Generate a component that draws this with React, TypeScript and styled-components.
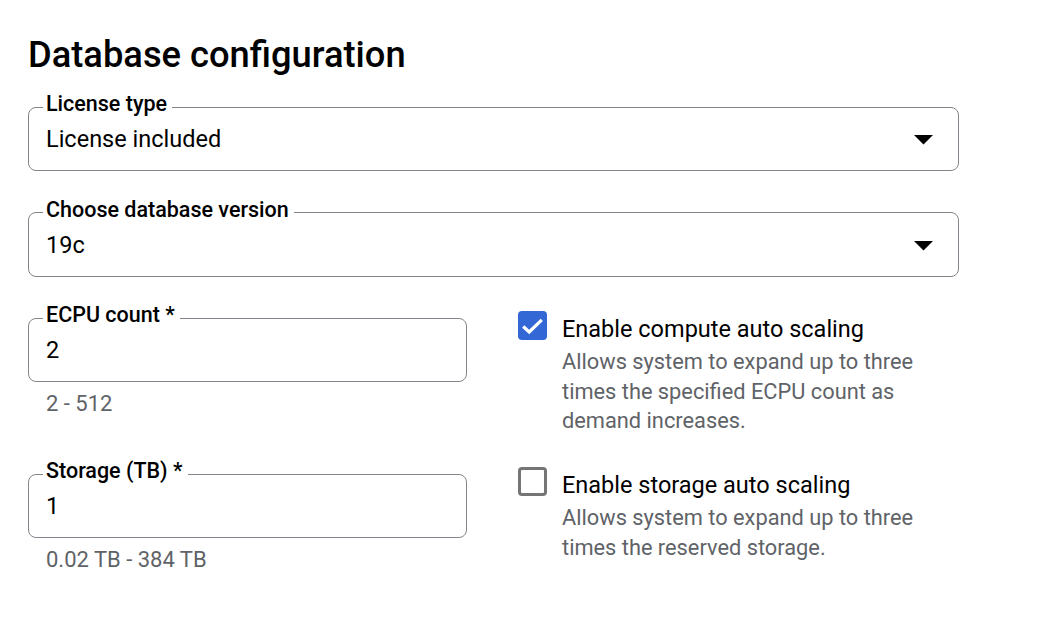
import styled, { createGlobalStyle } from "styled-components";

const GlobalStyle = createGlobalStyle`
	html, body {
		margin: 0;
		padding: 0;
		background: #ffffff;
		font-family: Roboto, "Noto Sans", Arial, sans-serif;
		color: #000000;
	}
	* {
		box-sizing: border-box;
	}
`;

const Page = styled.div`
	width: 1039px;
	height: 643px;
	padding: 33px 0 0 28px;
`;

const Title = styled.h1`
	margin: 0 0 14px 0;
	font-size: 36.3px;
	line-height: 44px;
	font-weight: 500;
	color: #000000;
`;

const Form = styled.div`
	display: flex;
	flex-direction: column;
	width: 931px;
`;

const Field = styled.fieldset`
	position: relative;
	margin: 0;
	width: 100%;
	padding: 1px 17px 16px 14px;
	border: 1px solid #80868b;
	border-radius: 8px;
	min-inline-size: 0;
`;

const Legend = styled.legend`
	padding: 0 5px 6px 3px;
	font-size: 21.5px;
	line-height: 26px;
	font-weight: 500;
	color: #000000;
	white-space: nowrap;
`;

const Value = styled.div`
	padding-left: 3px;
	font-size: 23.5px;
	line-height: 30px;
	color: #000000;
`;

const Caret = styled.svg`
	position: absolute;
	right: 25px;
	top: 12px;
	width: 19px;
	height: 10px;
`;

const SelectBlock = styled.div`
	margin-bottom: 25.5px;
`;

const Row = styled.div`
	display: flex;
	gap: 51px;
	align-items: flex-start;
`;

const RowSpacer = styled.div`
	height: 22.5px;
`;

const LeftCol = styled.div`
	width: 439px;
	flex-shrink: 0;
`;

const Helper = styled.div`
	margin-top: 8px;
	padding-left: 18px;
	font-size: 22px;
	line-height: 28px;
	color: #5f6368;
`;

const CheckRow = styled.label`
	display: flex;
	gap: 15px;
	padding-top: 9px;
	width: 420px;
`;

const Box = styled.span<{ $checked: boolean }>`
	flex-shrink: 0;
	width: 29px;
	height: 29px;
	border-radius: 4px;
	display: flex;
	align-items: center;
	justify-content: center;
	background: ${({ $checked }) => ($checked ? "#3367d6" : "#ffffff")};
	border: ${({ $checked }) => ($checked ? "none" : "3px solid #757575")};
`;

const CheckText = styled.div`
	display: flex;
	flex-direction: column;
`;

const CheckLabel = styled.div`
	font-size: 23.5px;
	line-height: 30px;
	color: #000000;
	margin-top: 2.5px;
`;

const CheckDesc = styled.div`
	margin-top: 3.5px;
	width: 360px;
	font-size: 21.8px;
	line-height: 29.5px;
	color: #5f6368;
`;

const DropCaret = () => (
	<Caret viewBox="0 0 19 10">
		<path d="M0 0 L19 0 L9.5 9.5 Z" fill="#000000" />
	</Caret>
);

const Checkbox = ({ checked }: { checked: boolean }) => (
	<Box $checked={checked}>
		{checked && (
			<svg width="23" height="18" viewBox="0 0 23 18">
				<path d="M2.2 9.5 L8.2 15 L20.8 2.8" fill="none" stroke="#ffffff" strokeWidth="3.2" />
			</svg>
		)}
	</Box>
);

export default function App() {
	return (
		<>
			<GlobalStyle />
			<Page>
				<Title>Database configuration</Title>
				<Form>
					<SelectBlock>
						<Field>
							<Legend>License type</Legend>
							<Value>License included</Value>
							<DropCaret />
						</Field>
					</SelectBlock>
					<SelectBlock>
						<Field>
							<Legend>Choose database version</Legend>
							<Value>19c</Value>
							<DropCaret />
						</Field>
					</SelectBlock>

					<Row>
						<LeftCol>
							<Field>
								<Legend>ECPU count *</Legend>
								<Value>2</Value>
							</Field>
							<Helper>2 - 512</Helper>
						</LeftCol>
						<CheckRow>
							<Checkbox checked />
							<CheckText>
								<CheckLabel>Enable compute auto scaling</CheckLabel>
								<CheckDesc>
									Allows system to expand up to three times the specified ECPU count as demand increases.
								</CheckDesc>
							</CheckText>
						</CheckRow>
					</Row>
					<RowSpacer />
					<Row>
						<LeftCol>
							<Field>
								<Legend>Storage (TB) *</Legend>
								<Value>1</Value>
							</Field>
							<Helper>0.02 TB - 384 TB</Helper>
						</LeftCol>
						<CheckRow>
							<Checkbox checked={false} />
							<CheckText>
								<CheckLabel>Enable storage auto scaling</CheckLabel>
								<CheckDesc>Allows system to expand up to three times the reserved storage.</CheckDesc>
							</CheckText>
						</CheckRow>
					</Row>
				</Form>
			</Page>
		</>
	);
}
